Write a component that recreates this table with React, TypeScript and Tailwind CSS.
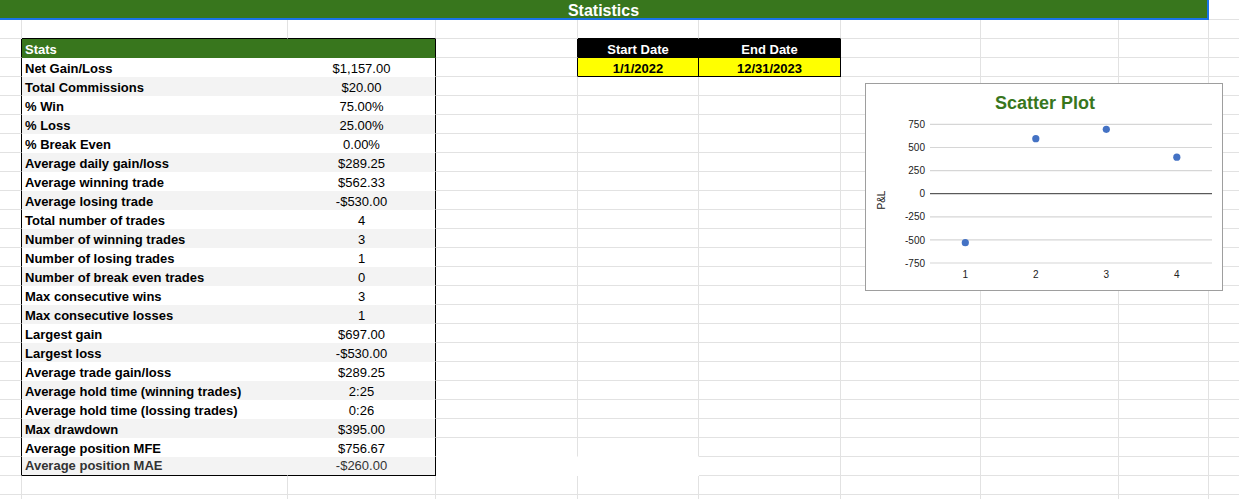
import React from 'react';
import clsx from 'clsx';

const COLS = [
  'w-[22px]',
  'w-[266px]',
  'w-[148px]',
  'w-[142px]',
  'w-[121px]',
  'w-[142px]',
  'w-[140px]',
  'w-[138px]',
  'w-[90px]',
  'w-[31px]',
];

const stats: [string, string][] = [
  ['Net Gain/Loss', '$1,157.00'],
  ['Total Commissions', '$20.00'],
  ['% Win', '75.00%'],
  ['% Loss', '25.00%'],
  ['% Break Even', '0.00%'],
  ['Average daily gain/loss', '$289.25'],
  ['Average winning trade', '$562.33'],
  ['Average losing trade', '-$530.00'],
  ['Total number of trades', '4'],
  ['Number of winning trades', '3'],
  ['Number of losing trades', '1'],
  ['Number of break even trades', '0'],
  ['Max consecutive wins', '3'],
  ['Max consecutive losses', '1'],
  ['Largest gain', '$697.00'],
  ['Largest loss', '-$530.00'],
  ['Average trade gain/loss', '$289.25'],
  ['Average hold time (winning trades)', '2:25'],
  ['Average hold time (lossing trades)', '0:26'],
  ['Max drawdown', '$395.00'],
  ['Average position MFE', '$756.67'],
  ['Average position MAE', '-$260.00'],
];

const trades = [-530, 595, 697, 395];

const GRID_R = 'border-r-[#e2e2e2]';
const GRID_B = 'border-b-[#e2e2e2]';
const LAST_ROW = 3 + stats.length; // sheet row of the last stats line

interface CellSpec {
  right: string;
  bottom: string;
  cls: string;
  content: React.ReactNode;
}

// works out what a sheet cell looks like (r is the 1-based sheet row, c the column index)
function cellSpec(r: number, c: number): CellSpec {
  let right = GRID_R;
  let bottom = GRID_B;
  let cls = 'bg-white';
  let content: React.ReactNode = null;
  const inTable = r >= 3 && r <= LAST_ROW;

  if (inTable && c === 0) right = 'border-r-black';
  if (r === 2 && (c === 1 || c === 2)) bottom = 'border-b-black';

  if (inTable && (c === 1 || c === 2)) {
    right = c === 1 ? 'border-r-transparent' : 'border-r-black';
    bottom = r === LAST_ROW ? 'border-b-black' : 'border-b-transparent';
    if (r === 3) {
      cls = 'bg-[#38761d] text-white font-bold pl-[3px]';
      content = c === 1 ? 'Stats' : null;
    } else {
      const idx = r - 4;
      const [label, value] = stats[idx];
      cls = clsx(
        idx % 2 ? 'bg-[#f3f3f3]' : 'bg-white',
        r === LAST_ROW ? 'text-[#333] pb-[2px]' : 'text-black',
      );
      if (c === 1) {
        cls = clsx(cls, 'font-bold pl-[3px]');
        content = label;
      } else {
        cls = clsx(cls, 'justify-center');
        content = value;
      }
    }
  }

  // date box
  if ((r === 3 || r === 4) && c === 3) right = 'border-r-black';
  if (r === 2 && (c === 4 || c === 5)) bottom = 'border-b-black';
  if ((r === 3 || r === 4) && (c === 4 || c === 5)) {
    right = 'border-r-black';
    bottom = 'border-b-black';
    if (r === 3) {
      cls = 'bg-black text-white font-bold justify-center';
      content = c === 4 ? 'Start Date' : 'End Date';
    } else {
      cls = 'bg-[#ffff00] text-black font-bold justify-center';
      content = c === 4 ? '1/1/2022' : '12/31/2023';
    }
  }

  // blank patch near the bottom
  if (r === LAST_ROW - 1 && (c === 3 || c === 4)) bottom = 'border-b-transparent';
  if (r === LAST_ROW && (c === 3 || c === 4)) {
    right = 'border-r-transparent';
    bottom = 'border-b-transparent';
  }

  return { right, bottom, cls, content };
}

const ScatterChart: React.FC = () => {
  const y = (v: number) => 109.7 - v * 0.0924;
  const x = (i: number) => 99.3 + i * 70.5;
  const ticks = [750, 500, 250, 0, -250, -500, -750];

  return (
    <div className="absolute left-[865px] top-[83px] h-[208px] w-[358px] border border-[#9e9e9e] bg-white">
      <svg width="356" height="206" className="block">
        <text x="179" y="25" textAnchor="middle" fontSize="18" fontWeight="bold" fill="#38761d">
          Scatter Plot
        </text>
        {ticks.map((t) => (
          <g key={t}>
            <line
              x1="64"
              x2="346"
              y1={y(t)}
              y2={y(t)}
              stroke={t === 0 ? '#333333' : '#d6d6d6'}
              strokeWidth={t === 0 ? 1 : 1.2}
            />
            <text x="59" y={y(t) + 3.6} textAnchor="end" fontSize="10" fill="#222">
              {t}
            </text>
          </g>
        ))}
        {trades.map((v, i) => (
          <g key={i}>
            <text x={x(i)} y="193.6" textAnchor="middle" fontSize="10" fill="#222">
              {i + 1}
            </text>
            <circle cx={x(i)} cy={y(v)} r="3.6" fill="#4472c4" />
          </g>
        ))}
        <text
          x="15.7"
          y="116"
          textAnchor="middle"
          dominantBaseline="central"
          fontSize="10"
          fill="#222"
          transform="rotate(-90 15.7 116)"
        >
          P&amp;L
        </text>
      </svg>
    </div>
  );
};

const App: React.FC = () => {
  const sheetRows = Array.from({ length: 26 }, (_, i) => i + 2);

  return (
    <div className="relative h-[499px] w-[1239px] overflow-hidden bg-white font-['Liberation_Sans',Arial,sans-serif] text-[13px] text-black">
      {/* title row */}
      <div className="flex h-[20px]">
        <div className="flex h-full w-[1209px] shrink-0 justify-center border-r-2 border-b-2 border-[#1a73e8] bg-[#38761d]">
          <span className="pt-[2px] text-[16px] leading-[18px] font-bold text-white">Statistics</span>
        </div>
        <div className="h-full w-[31px] shrink-0 border-b border-[#e2e2e2] bg-white" />
      </div>

      {sheetRows.map((r) => (
        <div key={r} className="flex h-[19px]">
          {COLS.map((w, c) => {
            const s = cellSpec(r, c);
            return (
              <div
                key={c}
                className={clsx(
                  'flex h-full shrink-0 items-end overflow-hidden whitespace-nowrap border-r border-b leading-[15px]',
                  w,
                  s.right,
                  s.bottom,
                  s.cls,
                )}
              >
                {s.content}
              </div>
            );
          })}
        </div>
      ))}

      <ScatterChart />
    </div>
  );
};

export default App;
